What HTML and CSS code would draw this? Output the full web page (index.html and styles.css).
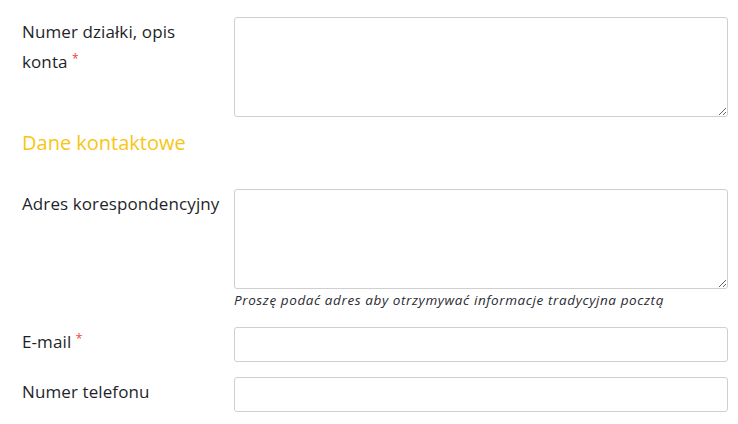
FILE: index.html
```html
<!DOCTYPE html>
<html lang="pl">
<head>
<meta charset="utf-8">
<link rel="stylesheet" href="styles.css">
</head>
<body>
<form class="form">
  <div class="row row-first">
    <label class="label">Numer działki, opis konta <span class="req">*</span></label>
    <div class="field"><textarea class="textarea"></textarea></div>
  </div>
  <h3 class="section">Dane kontaktowe</h3>
  <div class="row">
    <label class="label">Adres korespondencyjny</label>
    <div class="field">
      <textarea class="textarea"></textarea>
      <p class="help">Proszę podać adres aby otrzymywać informacje tradycyjna pocztą</p>
    </div>
  </div>
  <div class="row row-email">
    <label class="label">E-mail <span class="req">*</span></label>
    <div class="field"><input class="input" type="text"></div>
  </div>
  <div class="row row-phone">
    <label class="label">Numer telefonu</label>
    <div class="field"><input class="input" type="text"></div>
  </div>
</form>
</body>
</html>
```
FILE: styles.css
```css
* { box-sizing: border-box; }
html, body { margin: 0; padding: 0; background: #fff; }
body {
  font-family: "Open Sans", "Noto Sans", sans-serif;
  color: #1f1f2b;
}
.form {
  padding: 17px 10px 0 22px;
}
.row {
  display: grid;
  grid-template-columns: 212px 1fr;
}
.label {
  font-size: 17px;
  line-height: 30px;
  padding-right: 10px;
  letter-spacing: 0.1px;
}
.req {
  display: inline-block;
  color: #e8453c;
  font-size: 12px;
  line-height: 12px;
  vertical-align: 5px;
}
.field { display: flex; flex-direction: column; }
.textarea {
  display: block;
  width: 100%;
  height: 100px;
  border: 1px solid #cfcfcf;
  border-radius: 3px;
  margin: 0;
  padding: 6px 10px;
  font: inherit;
}
.input {
  display: block;
  width: 100%;
  height: 35px;
  border: 1px solid #cfcfcf;
  border-radius: 3px;
  margin: 0;
  padding: 6px 10px;
  font: inherit;
}
.section {
  margin: 11px 0 31px;
  font-size: 20px;
  line-height: 30px;
  font-weight: 400;
  color: #f7c613;
}
.help {
  margin: 1px 0 0;
  font-size: 13.5px;
  line-height: 20px;
  font-style: italic;
  letter-spacing: 0.6px;
  color: #2a2a33;
}
.row-email { margin-top: 17px; }
.row-phone { margin-top: 15px; }
```
